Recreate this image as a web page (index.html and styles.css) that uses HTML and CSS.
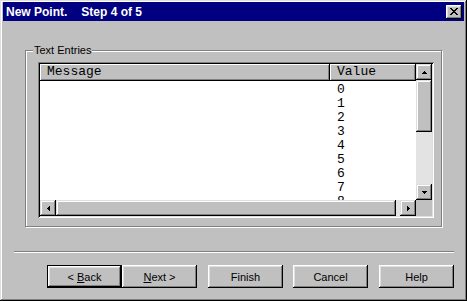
FILE: index.html
```html
<!DOCTYPE html>
<html lang="en">
<head>
  <meta charset="UTF-8" />
  <title>New Point. Step 4 of 5</title>
  <link rel="stylesheet" href="styles.css">
</head>
<body>
  <div class="window">
    <div class="titlebar">
      <span>New Point.</span>
      <span class="step">Step 4 of 5</span>
      <button class="close" aria-label="Close">
        <svg width="8" height="7" viewBox="0 0 8 7"><path d="M0 0h2v1h-2z M6 0h2v1h-2z M1 1h2v1h-2z M5 1h2v1h-2z M2 2h4v1h-4z M3 3h2v1h-2z M2 4h4v1h-4z M1 5h2v1h-2z M5 5h2v1h-2z M0 6h2v1h-2z M6 6h2v1h-2z" fill="#000"/></svg>
      </button>
    </div>

    <div class="client">
      <div class="group">
        <span class="group-label">Text Entries</span>
        <div class="listview">
          <div class="lv-view">
            <div class="lv-header">
              <div class="hcol msg">Message</div>
              <div class="hcol val">Value</div>
            </div>
            <div class="lv-rows">
              <div class="row"><span class="c-msg"></span><span class="c-val">0</span></div>
              <div class="row"><span class="c-msg"></span><span class="c-val">1</span></div>
              <div class="row"><span class="c-msg"></span><span class="c-val">2</span></div>
              <div class="row"><span class="c-msg"></span><span class="c-val">3</span></div>
              <div class="row"><span class="c-msg"></span><span class="c-val">4</span></div>
              <div class="row"><span class="c-msg"></span><span class="c-val">5</span></div>
              <div class="row"><span class="c-msg"></span><span class="c-val">6</span></div>
              <div class="row"><span class="c-msg"></span><span class="c-val">7</span></div>
              <div class="row"><span class="c-msg"></span><span class="c-val">8</span></div>
            </div>
          </div>

          <div class="vscroll">
            <div class="sb-btn"><svg width="5" height="3" viewBox="0 0 5 3"><path d="M2 0h1v1h-1z M1 1h3v1h-3z M0 2h5v1h-5z" fill="#000"/></svg></div>
            <div class="thumb v-thumb"></div>
            <div class="track"></div>
            <div class="sb-btn"><svg width="5" height="3" viewBox="0 0 5 3"><path d="M0 0h5v1h-5z M1 1h3v1h-3z M2 2h1v1h-1z" fill="#000"/></svg></div>
          </div>

          <div class="hscroll">
            <div class="sb-btn"><svg width="3" height="5" viewBox="0 0 3 5"><path d="M2 0h1v5h-1z M1 1h1v3h-1z M0 2h1v1h-1z" fill="#000"/></svg></div>
            <div class="thumb h-thumb"></div>
            <div class="track"></div>
            <div class="sb-btn"><svg width="3" height="5" viewBox="0 0 3 5"><path d="M0 0h1v5h-1z M1 1h1v3h-1z M2 2h1v1h-1z" fill="#000"/></svg></div>
          </div>

          <div class="corner"></div>
        </div>
      </div>

      <div class="sep"></div>

      <div class="buttons">
        <button class="btn default">&lt; <u>B</u>ack</button>
        <button class="btn"><u>N</u>ext &gt;</button>
        <button class="btn finish">Finish</button>
        <button class="btn cancel">Cancel</button>
        <button class="btn help">Help</button>
      </div>
    </div>
  </div>
</body>
</html>
```

FILE: styles.css
```css
* { box-sizing: border-box; }
body {
  margin: 0;
  font-family: "Liberation Sans", Arial, sans-serif;
  font-size: 11px;
  color: #000;
  background: #c0c0c0;
}
.window {
  width: 467px;
  height: 301px;
  padding: 2px 3px 3px 3px;
  background: #c0c0c0;
  box-shadow: inset -1px -1px #000, inset 1px 1px #dfdfdf,
              inset -2px -2px #808080, inset 2px 2px #fff;
  display: flex;
  flex-direction: column;
}
.titlebar {
  height: 19px;
  background: #000080;
  color: #fff;
  font-size: 12px;
  font-weight: bold;
  display: flex;
  align-items: center;
  padding: 0 2px 0 3px;
}
.step {
  margin-left: 14px;
}
.close {
  margin-left: auto;
  width: 16px;
  height: 14px;
  padding: 0;
  border: none;
  background: #c0c0c0;
  box-shadow: inset -1px -1px #000, inset 1px 1px #fff,
              inset -2px -2px #808080, inset 2px 2px #dfdfdf;
  display: flex;
  align-items: center;
  justify-content: center;
}
.client {
  display: flex;
  flex-direction: column;
}
.group {
  position: relative;
  margin: 29px 0 0 22px;
  width: 417px;
  height: 177px;
  border: 1px solid #808080;
  box-shadow: inset 1px 1px #fff, 1px 1px #fff;
  padding: 11px 0 0 12px;
}
.group-label {
  position: absolute;
  top: -7px;
  left: 7px;
  padding: 0 1px;
  line-height: 13px;
  background: #c0c0c0;
}
.listview {
  width: 396px;
  height: 156px;
  padding: 2px;
  background: #fff;
  box-shadow: inset 1px 1px #808080, inset -1px -1px #fff,
              inset 2px 2px #000, inset -2px -2px #dfdfdf;
  display: grid;
  grid-template-columns: 376px 16px;
  grid-template-rows: 136px 16px;
}
.lv-view {
  overflow: hidden;
  font-family: "Liberation Mono", "Courier New", monospace;
  font-size: 13px;
}
.lv-header {
  display: flex;
  height: 17px;
}
.hcol {
  height: 17px;
  line-height: 16px;
  padding-left: 7px;
  background: #c0c0c0;
  box-shadow: inset -1px -1px #000, inset 1px 1px #fff,
              inset -2px -2px #808080;
}
.hcol.msg { width: 290px; }
.hcol.val { width: 86px; }
.lv-rows {
  padding-top: 2px;
}
.row {
  display: flex;
  height: 14px;
  line-height: 14px;
}
.c-msg { width: 290px; }
.c-val { padding-left: 7px; }
.vscroll {
  display: flex;
  flex-direction: column;
}
.hscroll {
  display: flex;
}
.sb-btn, .thumb {
  flex: none;
  background: #c0c0c0;
  box-shadow: inset -1px -1px #000, inset 1px 1px #dfdfdf,
              inset -2px -2px #808080, inset 2px 2px #fff;
}
.sb-btn {
  width: 16px;
  height: 16px;
  display: flex;
  align-items: center;
  justify-content: center;
}
.sb-btn svg { display: block; }
.v-thumb { height: 52px; }
.h-thumb { width: 340px; }
.track {
  flex: 1;
  background: #e3e3e3;
}
.corner {
  background: #c0c0c0;
}
.sep {
  margin: 24px 0 0 11px;
  width: 440px;
  height: 2px;
  border-top: 1px solid #808080;
  border-bottom: 1px solid #fff;
}
.buttons {
  display: flex;
  margin: 12px 0 0 44px;
}
.btn {
  width: 75px;
  height: 23px;
  padding: 0;
  border: none;
  font: inherit;
  color: #000;
  background: #c0c0c0;
  box-shadow: inset -1px -1px #000, inset 1px 1px #fff,
              inset -2px -2px #808080, inset 2px 2px #dfdfdf;
}
.btn.default {
  box-shadow: inset 0 0 0 1px #000, inset -2px -2px #000, inset 2px 2px #fff,
              inset -3px -3px #808080, inset 3px 3px #dfdfdf;
}
.btn.finish { margin-left: 11px; }
.btn.cancel { margin-left: 10px; }
.btn.help { margin-left: 11px; }
```
